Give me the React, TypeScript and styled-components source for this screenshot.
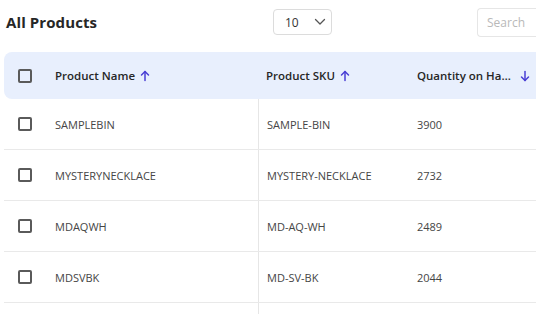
import React from "react";
import styled, { createGlobalStyle } from "styled-components";

const Global = createGlobalStyle`
  html, body { margin: 0; padding: 0; background: #fff; overflow: hidden; }
  body { font-family: "Open Sans", "Inter", sans-serif; }
`;

const Page = styled.div`
  width: 536px;
  height: 314px;
  overflow: hidden;
`;

const TopBar = styled.div`
  display: flex;
  align-items: center;
  height: 44px;
  padding: 0 0 0 6px;
`;

const Title = styled.h1`
  margin: 0;
  font-size: 15px;
  font-weight: 700;
  color: #262626;
  width: 267px;
  flex-shrink: 0;
  letter-spacing: 0.1px;
`;

const Select = styled.div`
  box-sizing: border-box;
  width: 59px;
  height: 26px;
  border: 1px solid #dcdcdc;
  border-radius: 4px;
  display: flex;
  align-items: center;
  padding-left: 11px;
  gap: 15px;
  font-size: 12px;
  color: #333;
  flex-shrink: 0;
`;

const Search = styled.div`
  box-sizing: border-box;
  margin-left: 145px;
  width: 80px;
  height: 29px;
  border: 1px solid #e6e6e6;
  border-right: none;
  border-radius: 4px 0 0 4px;
  display: flex;
  align-items: center;
  padding-left: 9px;
  font-size: 12px;
  color: #b9b9b9;
  flex-shrink: 0;
`;

const Table = styled.div`
  margin-left: 4px;
  margin-top: 8px;
  width: 560px;
`;

const Grid = styled.div`
  display: grid;
  grid-template-columns: 36px 218px 151px 130px;
`;

const HeadRow = styled(Grid)`
  height: 47px;
  background: #e8effd;
  border-radius: 8px 0 0 8px;
  align-items: center;
`;

const Row = styled(Grid)`
  height: 50px;
  border-bottom: 1px solid #e9e9e9;
  align-items: stretch;
`;

const Cell = styled.div<{ $divider?: boolean; $pad?: number }>`
  display: flex;
  align-items: center;
  padding-left: ${(p) => p.$pad ?? 0}px;
  border-left: ${(p) => (p.$divider ? "1px solid #e6e6e6" : "none")};
  min-width: 0;
  box-sizing: border-box;
`;

const HeadCell = styled.div<{ $pad?: number }>`
  display: flex;
  align-items: center;
  padding-left: ${(p) => p.$pad ?? 0}px;
  font-size: 11.5px;
  font-weight: 600;
  color: #262626;
  gap: 4px;
  min-width: 0;
  white-space: nowrap;
`;

const Truncate = styled.span`
  display: inline-block;
  max-width: 94px;
  overflow: hidden;
  text-overflow: ellipsis;
  white-space: nowrap;
  margin-right: 4px;
`;

const Text = styled.span`
  font-size: 11px;
  color: #454545;
`;

const Check = styled.span`
  display: inline-block;
  box-sizing: border-box;
  width: 14px;
  height: 14px;
  border: 2px solid #5a5a5a;
  border-radius: 2px;
  margin-left: 14px;
`;

const Arrow = ({ down }: { down?: boolean }) => (
  <svg width="12" height="12" viewBox="0 0 12 12" fill="none" stroke="#4a3fd4" strokeWidth="1.5" strokeLinecap="round" strokeLinejoin="round">
    {down ? (
      <>
        <path d="M6 1.5v9" />
        <path d="M2.5 7l3.5 3.5L9.5 7" />
      </>
    ) : (
      <>
        <path d="M6 10.5v-9" />
        <path d="M2.5 5L6 1.5 9.5 5" />
      </>
    )}
  </svg>
);

const Chevron = () => (
  <svg width="12" height="8" viewBox="0 0 12 8" fill="none" stroke="#555" strokeWidth="1.3" strokeLinecap="round" strokeLinejoin="round">
    <path d="M1.5 1.5L6 6l4.5-4.5" />
  </svg>
);

const rows = [
  { name: "SAMPLEBIN", sku: "SAMPLE-BIN", qty: "3900" },
  { name: "MYSTERYNECKLACE", sku: "MYSTERY-NECKLACE", qty: "2732" },
  { name: "MDAQWH", sku: "MD-AQ-WH", qty: "2489" },
  { name: "MDSVBK", sku: "MD-SV-BK", qty: "2044" },
  { name: "", sku: "", qty: "" },
];

export default function App() {
  return (
    <Page>
      <Global />
      <TopBar>
        <Title>All Products</Title>
        <Select>
          <span>10</span>
          <Chevron />
        </Select>
        <Search>Search</Search>
      </TopBar>
      <Table>
        <HeadRow>
          <HeadCell>
            <Check />
          </HeadCell>
          <HeadCell $pad={15}>
            Product Name <Arrow />
          </HeadCell>
          <HeadCell $pad={8}>
            Product SKU <Arrow />
          </HeadCell>
          <HeadCell $pad={8}>
            <Truncate>Quantity on Hand</Truncate>
            <Arrow down />
          </HeadCell>
        </HeadRow>
        {rows.map((r, i) => (
          <Row key={i}>
            <Cell>{r.name && <Check />}</Cell>
            <Cell $pad={15}>
              <Text>{r.name}</Text>
            </Cell>
            <Cell $divider $pad={8}>
              <Text>{r.sku}</Text>
            </Cell>
            <Cell $pad={8}>
              <Text>{r.qty}</Text>
            </Cell>
          </Row>
        ))}
      </Table>
    </Page>
  );
}
